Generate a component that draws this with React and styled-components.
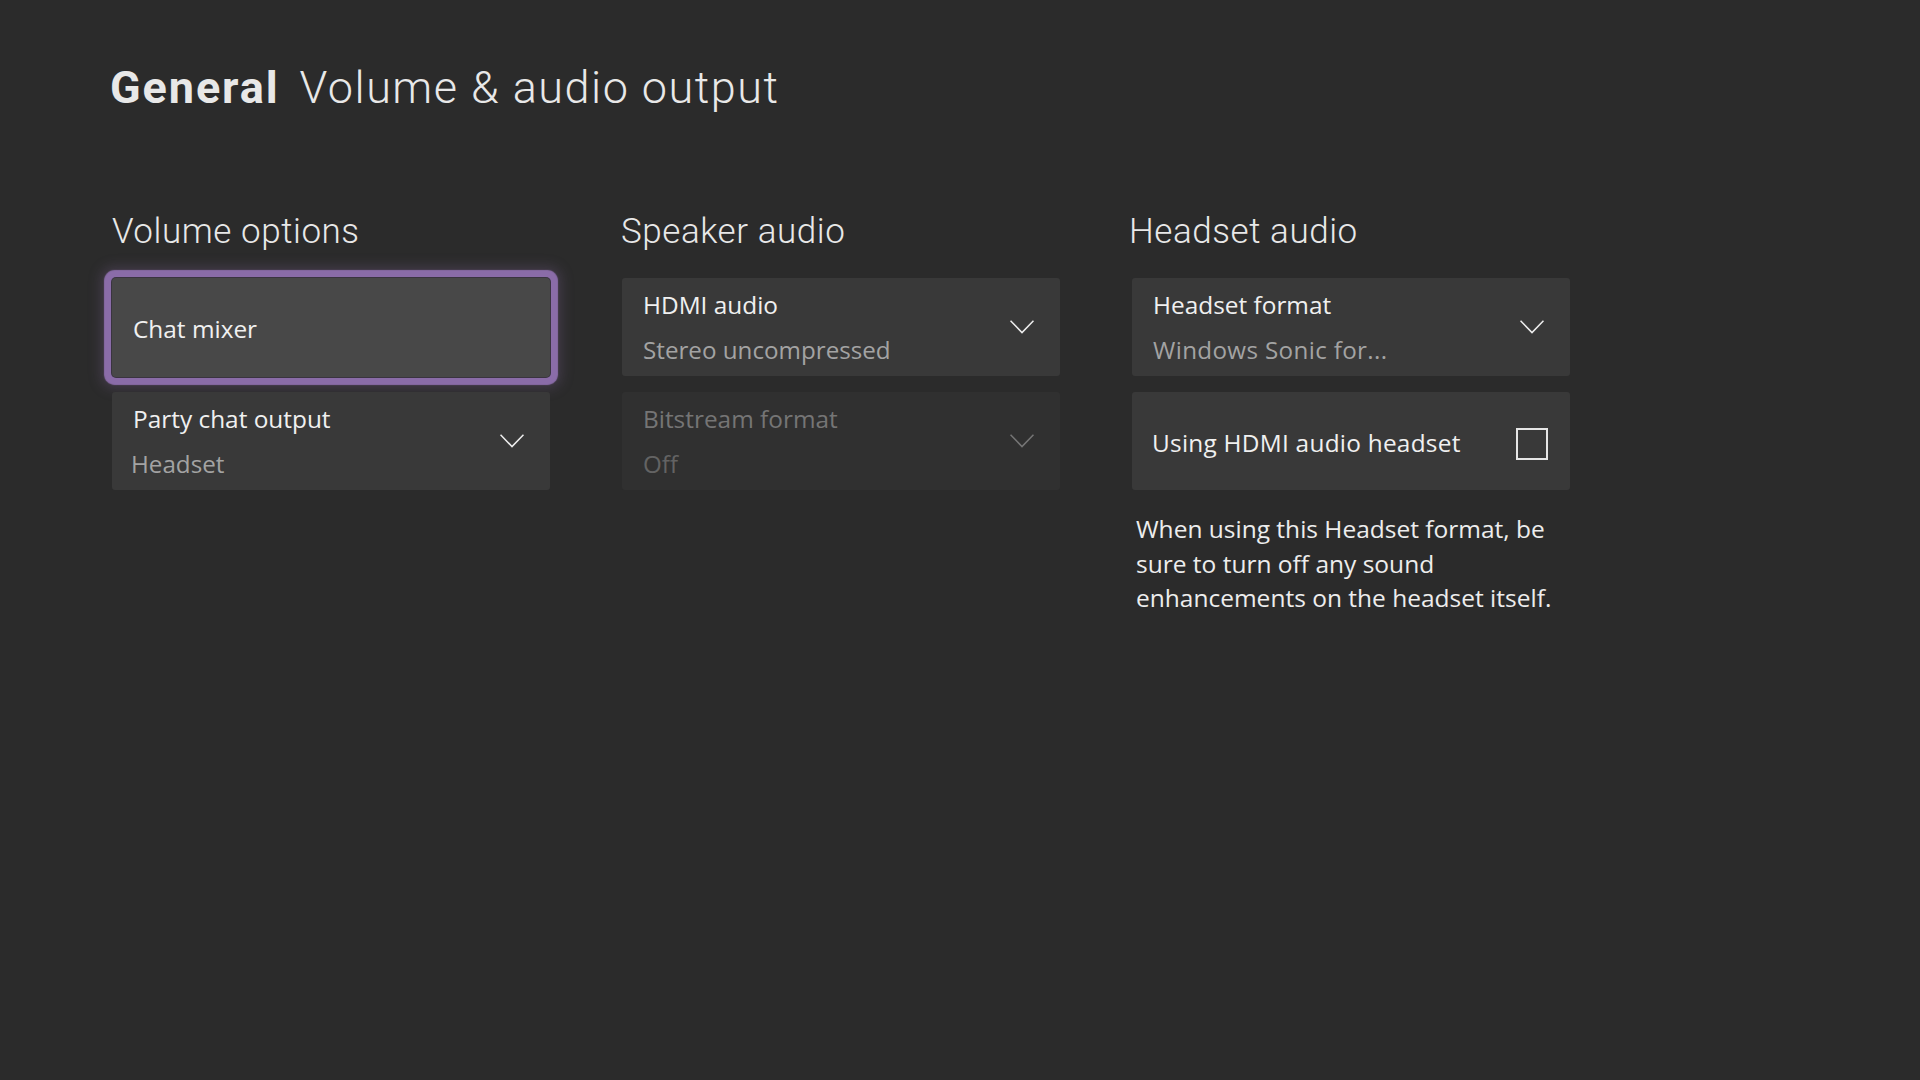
import React from 'react';
import styled, { createGlobalStyle } from 'styled-components';

const GlobalStyle = createGlobalStyle`
  html, body {
    margin: 0;
    background: #2b2b2b;
  }
  body {
    font-family: "Open Sans", "Noto Sans", sans-serif;
    color: #f0f0f0;
  }
`;

const Page = styled.div`
  box-sizing: border-box;
  width: 1920px;
  height: 1080px;
  padding: 54px 0 0 112px;
  background: #2b2b2b;
  overflow: hidden;
`;

const Title = styled.h1`
  display: flex;
  gap: 20px;
  margin: 0 0 0 -2px;
  height: 66px;
  font-family: Roboto, "Liberation Sans", sans-serif;
  font-size: 45px;
  line-height: 68px;
  font-weight: 350;
  letter-spacing: 1.5px;
  color: #e8e8e8;
`;

const Strong = styled.span`
  font-weight: 700;
  letter-spacing: 1.9px;
`;

const Columns = styled.div`
  display: grid;
  grid-template-columns: repeat(3, 438px);
  column-gap: 72px;
  margin-top: 80px;
`;

const Column = styled.section`
  display: flex;
  flex-direction: column;
`;

const Heading = styled.h2`
  margin: 0 0 16px ${p => p.$shift || 0}px;
  height: 62px;
  font-family: Roboto, "Liberation Sans", sans-serif;
  font-size: 35px;
  line-height: 64px;
  font-weight: 350;
  letter-spacing: 0.55px;
  color: #e8e8e8;
`;

const Stack = styled.div`
  display: flex;
  flex-direction: column;
  gap: 16px;
`;

const Card = styled.div`
  box-sizing: border-box;
  display: flex;
  align-items: center;
  justify-content: space-between;
  height: 98px;
  padding: 0 ${p => p.$right || 26}px 0 21px;
  border-radius: 3px;
  background: ${p => (p.$disabled ? '#303030' : '#393939')};
`;

const FocusCard = styled(Card)`
  height: 99px;
  margin-bottom: -1px;
  background: #484848;
  box-shadow:
    0 0 0 1px #3a3440,
    0 0 1px 7.5px #8a6ca8,
    0 0 13px 11px rgba(138, 108, 168, 0.26);
  border-radius: 4px;
`;

const Lines = styled.div`
  display: flex;
  flex-direction: column;
`;

const Label = styled.div`
  margin-left: ${p => p.$shift || 0}px;
  font-size: 24.4px;
  line-height: 45px;
  letter-spacing: ${p => p.$spread || 0}px;
  color: ${p => (p.$disabled ? '#757575' : '#f0f0f0')};
`;

const SingleLabel = styled(Label)`
  padding-top: 2px;
`;

const Value = styled.div`
  margin-left: ${p => p.$shift || 0}px;
  font-size: 24.2px;
  line-height: 45px;
  letter-spacing: ${p => p.$spread || 0}px;
  color: ${p => (p.$disabled ? '#636363' : '#a3a3a3')};
`;

const Chevron = styled.svg`
  display: block;
  flex: none;
  width: 24px;
  height: 14px;
  fill: none;
  stroke: ${p => (p.$disabled ? '#757575' : '#ededed')};
  stroke-width: 1.6;
`;

const CheckBox = styled.span`
  box-sizing: border-box;
  display: block;
  flex: none;
  width: 32px;
  height: 32px;
  margin-top: 6px;
  border: 2px solid #e6e6e6;
`;

const Help = styled.p`
  margin: 22px 0 0 4px;
  font-size: 24.5px;
  line-height: 34.5px;
  color: #ededed;
`;

function Arrow({ disabled }) {
  return (
    <Chevron $disabled={disabled} viewBox="0 0 24 14">
      <path d="M.5.7L12 12.6 23.5.7" />
    </Chevron>
  );
}

function SelectCard({ label, value, disabled, valueShift, valueSpread }) {
  return (
    <Card $disabled={disabled}>
      <Lines>
        <Label $disabled={disabled}>{label}</Label>
        <Value $disabled={disabled} $shift={valueShift} $spread={valueSpread}>{value}</Value>
      </Lines>
      <Arrow disabled={disabled} />
    </Card>
  );
}

export default function App() {
  return (
    <Page>
      <GlobalStyle />
      <Title>
        <Strong>General</Strong>
        <span>Volume &amp; audio output</span>
      </Title>
      <Columns>
        <Column>
          <Heading>Volume options</Heading>
          <Stack>
            <FocusCard>
              <SingleLabel>Chat mixer</SingleLabel>
            </FocusCard>
            <SelectCard label="Party chat output" value="Headset" valueShift={-2} />
          </Stack>
        </Column>
        <Column>
          <Heading $shift={-1}>Speaker audio</Heading>
          <Stack>
            <SelectCard label="HDMI audio" value="Stereo uncompressed" />
            <SelectCard label="Bitstream format" value="Off" disabled />
          </Stack>
        </Column>
        <Column>
          <Heading $shift={-3}>Headset audio</Heading>
          <Stack>
            <SelectCard label="Headset format" value="Windows Sonic for..." valueSpread={0.35} />
            <Card $right={22}>
              <SingleLabel $shift={-1} $spread={0.25}>Using HDMI audio headset</SingleLabel>
              <CheckBox />
            </Card>
          </Stack>
          <Help>
            When using this Headset format, be sure to turn off any sound enhancements on the
            headset itself.
          </Help>
        </Column>
      </Columns>
    </Page>
  );
}
